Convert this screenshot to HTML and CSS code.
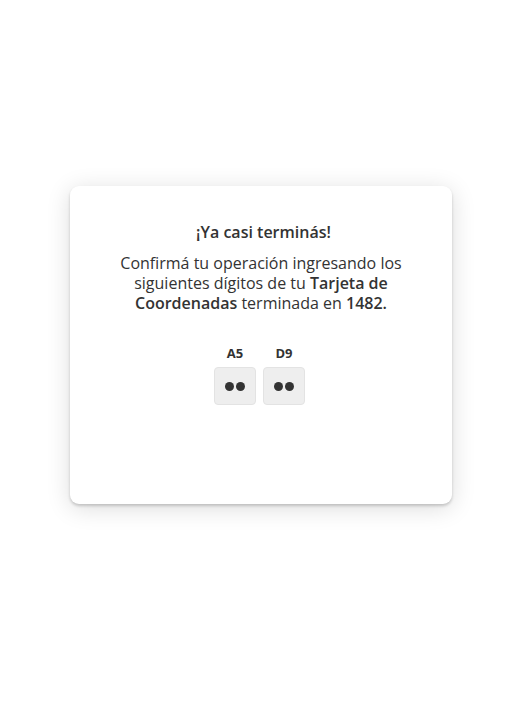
FILE: index.html
```html
<!DOCTYPE html>
<html lang="es">
<head>
<meta charset="utf-8">
<link rel="stylesheet" href="styles.css">
</head>
<body>
<div class="page">
  <div class="card">
    <h1 class="title">¡Ya casi terminás!</h1>
    <p class="text">Confirmá tu operación ingresando los siguientes dígitos de tu <b>Tarjeta de Coordenadas</b> terminada en <b>1482.</b></p>
    <div class="coords">
      <div class="coord">
        <span class="label">A5</span>
        <div class="box"><span class="dot"></span><span class="dot"></span></div>
      </div>
      <div class="coord">
        <span class="label">D9</span>
        <div class="box"><span class="dot"></span><span class="dot"></span></div>
      </div>
    </div>
  </div>
</div>
</body>
</html>
```
FILE: styles.css
```css
html, body { margin: 0; padding: 0; background: #fff; }
body { font-family: "Open Sans", sans-serif; color: #333; }
.page {
  height: 725px;
  display: flex;
  justify-content: center;
  padding-top: 186px;
  padding-left: 7px;
  box-sizing: border-box;
}
.card {
  width: 382px;
  height: 318px;
  box-sizing: border-box;
  background: #fff;
  border-radius: 9px;
  box-shadow: 0 2px 3px rgba(0,0,0,0.18), 0 4px 24px rgba(0,0,0,0.14);
  padding: 34px 38px 0;
  display: flex;
  flex-direction: column;
  align-items: center;
}
.title {
  margin: 0;
  padding-left: 5px;
  font-size: 16px;
  font-weight: 600;
  line-height: 24px;
  color: #333;
}
.text {
  margin: 9px 0 0;
  font-size: 16px;
  line-height: 20px;
  text-align: center;
  color: #333;
}
.text b { font-weight: 600; }
.coords {
  display: flex;
  gap: 7px;
  margin-top: 31px;
  margin-right: 3px;
}
.coord {
  display: flex;
  flex-direction: column;
  align-items: center;
}
.label {
  font-size: 13px;
  font-weight: 700;
  line-height: 18px;
  color: #333;
}
.box {
  margin-top: 5px;
  width: 42px;
  height: 38px;
  box-sizing: border-box;
  background: #eee;
  border: 1px solid #e3e3e3;
  border-radius: 4px;
  display: flex;
  align-items: center;
  justify-content: center;
  gap: 2px;
}
.dot {
  width: 9px;
  height: 9px;
  border-radius: 50%;
  background: #333;
}
```
